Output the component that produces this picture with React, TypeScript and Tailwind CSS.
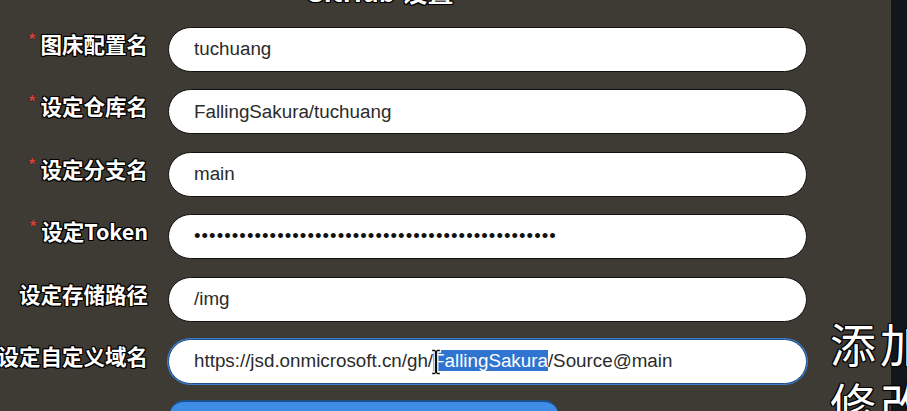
import React from "react";

const outline =
  "[text-shadow:0_0_2px_#000,1px_1px_0_#000,-1px_-1px_0_#000,1px_-1px_0_#000,-1px_1px_0_#000,0_1px_0_#000,0_-1px_0_#000,1px_0_0_#000,-1px_0_0_#000]";

type Row = { label: string; required: boolean; value?: string; kind?: "password" | "domain" };

const rows: Row[] = [
  { label: "图床配置名", required: true, value: "tuchuang" },
  { label: "设定仓库名", required: true, value: "FallingSakura/tuchuang" },
  { label: "设定分支名", required: true, value: "main" },
  { label: "设定Token", required: true, kind: "password" },
  { label: "设定存储路径", required: false, value: "/img" },
  { label: "设定自定义域名", required: false, kind: "domain" },
];

function IBeam() {
  return (
    <svg
      className="absolute left-[261px] top-[7px]"
      width="12"
      height="30"
      viewBox="0 0 12 30"
    >
      <path
        d="M1.5 2 H5 L6 3 L7 2 H10.5 V5 H7.8 V25 H10.5 V28 H7 L6 27 L5 28 H1.5 V25 H4.2 V5 H1.5 Z"
        fill="#111"
        stroke="#fff"
        strokeWidth="1.3"
      />
    </svg>
  );
}

export default function App() {
  return (
    <div className="relative flex h-[411px] w-[907px] overflow-hidden bg-[#3e3b35] font-['Liberation_Sans','Noto_Sans_CJK_SC',sans-serif]">
      <div className="flex w-[891px] flex-col">
        <div
          className={`mt-[-23px] h-[28px] pl-[305px] text-[26px] font-bold leading-[28px] text-white ${outline} font-['Noto_Sans_CJK_SC',sans-serif]`}
        >
          GitHub 设置
        </div>
        <div className="mt-[22px] flex flex-col gap-[17.4px]">
          {rows.map((r) => (
            <div key={r.label} className="flex items-start">
              <div className="flex w-[148px] shrink-0 justify-end pt-[5px]">
                {r.required && (
                  <span className="mr-[5px] mt-[-1px] text-[17px] font-bold leading-[17px] text-[#d2453f] [text-shadow:0_0_1px_#000]">
                    *
                  </span>
                )}
                <span
                  className={`whitespace-nowrap text-[21.5px] font-bold leading-[24px] text-white ${outline} font-['Noto_Sans_CJK_SC',sans-serif]`}
                >
                  {r.label}
                </span>
              </div>
              <div
                className={`relative ml-[20px] flex h-[45px] w-[639px] items-center rounded-full bg-white pl-[25px] text-[18.8px] text-[#2b2b2b] ${
                  r.kind === "domain"
                    ? "border-[1.5px] border-[#1f4f86] shadow-[0_0_0_1px_#3b7fc9]"
                    : "border-[1.5px] border-[#111]"
                }`}
              >
                {r.kind === "password" ? (
                  <span className="mt-[-2px] text-[18.6px] tracking-[1.05px] text-[#111]">
                    {"•".repeat(48)}
                  </span>
                ) : r.kind === "domain" ? (
                  <>
                    <span className="whitespace-nowrap">
                      https://jsd.onmicrosoft.cn/gh/
                      <span className="bg-[#2f74d0] text-white">FallingSakura</span>
                      /Source@main
                    </span>
                    <IBeam />
                  </>
                ) : (
                  <span>{r.value}</span>
                )}
              </div>
            </div>
          ))}
        </div>
        <div className="ml-[170px] mt-[16px] h-[30px] w-[388px] shrink-0 rounded-[14px] border-t-[2px] border-[#1d4f8c] bg-[#3d8de6]" />
      </div>
      <div className="w-[16px] bg-[#13171b]" />
      <div
        className={`absolute left-[830px] top-[312px] whitespace-nowrap text-[46px] font-normal leading-[60px] tracking-[4px] text-white ${outline} font-['Noto_Sans_CJK_SC',sans-serif]`}
      >
        添加
        <br />
        修改
      </div>
    </div>
  );
}
